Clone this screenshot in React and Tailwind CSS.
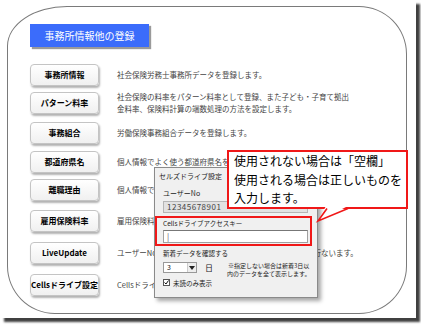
import React from 'react';

const rows = [
  { label: '事務所情報', mt: 'mt-0', text: ['社会保険労務士事務所データを登録します。'] },
  { label: 'パターン料率', mt: 'mt-[6px]', text: ['社会保険の料率をパターン料率として登録、また子ども・子育て拠出', '金料率、保険料計算の端数処理の方法を設定します。'] },
  { label: '事務組合', mt: 'mt-[8px]', text: ['労働保険事務組合データを登録します。'] },
  { label: '都道府県名', mt: 'mt-[7px]', text: ['個人情報でよく使う都道府県名を登録します。'] },
  { label: '離職理由', mt: 'mt-[6px]', text: ['個人情報でよく使う離職理由を登録します。'] },
  { label: '雇用保険料率', mt: 'mt-[9px]', text: ['雇用保険料率を登録します。'] },
  { label: 'LiveUpdate', mt: 'mt-[10px]', text: ['ユーザーNoを入力して、プログラムの最新アップデートを行ないます。'] },
  { label: 'Cellsドライブ設定', mt: 'mt-[10px]', text: ['Cellsドライブの設定を行います。'] },
];

const font = { fontFamily: '"Noto Sans CJK JP", "Noto Sans", sans-serif' };

const SettingsDialog = () => (
  <div className="absolute left-[154px] top-[167px] w-[164px] h-[131px] border border-[#8a8a8a] bg-[#f0f0f0] shadow-[3px_3px_4px_rgba(0,0,0,0.35)] text-[#222]">
    <div className="h-[17px] pt-[3px] pl-[4px] text-[7px] leading-[10px]">セルズドライブ設定</div>
    <div className="mt-[3px] pl-[8px] text-[7px] leading-[10px]">ユーザーNo</div>
    <div className="mt-[3px] ml-[8px] w-[145px] h-[12px] bg-[#e2e2e2] border border-[#b5b5b5] pl-[3px] text-[8px] leading-[10px] tracking-[0.5px] text-[#444]">12345678901</div>
    <div className="mt-[3px] w-[157px] h-[30px] border-2 border-[#f01818]">
      <div className="pt-[1px] pl-[6px] text-[6.5px] leading-[8px]">Cellsドライブアクセスキー</div>
      <div className="mt-[3px] ml-[6px] w-[145px] h-[13px] bg-white border border-[#a0a0a0] border-t-[#777] pl-[3px] text-[8px] leading-[11px] text-[#555]">|</div>
    </div>
    <div className="mt-[3px] pl-[8px] text-[6.5px] leading-[8px]">新着データを確認する</div>
    <div className="mt-[5px] pl-[8px] flex items-start">
      <div className="w-[34px] h-[11px] bg-white border border-[#999] flex">
        <div className="flex-1 pl-[3px] text-[7px] leading-[9px]">3</div>
        <div className="w-[9px] border-l border-[#ccc] bg-[#eee] flex items-center justify-center">
          <svg width="6" height="4" viewBox="0 0 6 4"><path d="M0 0h6L3 4z" fill="#222" /></svg>
        </div>
      </div>
      <div className="ml-[8px] text-[8px] leading-[11px]">日</div>
      <div className="ml-[14px] text-[6px] leading-[8px] text-center">※指定しない場合は新着3日以<br />内のデータを全て表示します。</div>
    </div>
    <div className="pl-[8px] flex items-center h-[9px]">
      <div className="w-[7px] h-[7px] border border-[#555] bg-white flex items-center justify-center">
        <svg width="5" height="5" viewBox="0 0 5 5"><path d="M0.5 2.5l1.5 1.5l2.5-3.5" stroke="#111" strokeWidth="1" fill="none" /></svg>
      </div>
      <span className="ml-[3px] text-[6.5px] leading-[8px]">未読のみ表示</span>
    </div>
  </div>
);

const Callout = () => (
  <>
    <div className="absolute left-[227px] top-[150px] w-[181px] h-[59px] border-2 border-[#f01818] bg-white pl-[5px] text-[12px] leading-[18.5px] text-black">
      <div>使用されない場合は「空欄」</div>
      <div>使用される場合は正しいものを</div>
      <div>入力します。</div>
    </div>
    <svg className="absolute left-[314px] top-[205px]" width="40" height="20" viewBox="0 0 40 20">
      <polygon points="12,1 4,16 34,1" fill="white" />
      <polyline points="13,3.5 4,16 34,3.5" fill="none" stroke="#f01818" strokeWidth="1.6" />
    </svg>
  </>
);

export default function App() {
  return (
    <div className="w-[421px] h-[325px] bg-white" style={font}>
      <div className="relative w-[416px] h-[318px] bg-white shadow-[4px_4px_2px_rgba(0,0,0,0.75)]">
        <div className="ml-[7px] pt-[6px]">
          <div className="w-[400px] h-[308px] border border-[#7a7a7a] rounded-[48px] rounded-tl-[60px_40px] pl-[22px] pt-[17px]">
            <div className="w-[119px] h-[23px] bg-[#3b6cfb] shadow-[2px_2px_1px_#9a9a9a] flex items-center justify-center text-white text-[10px]">
              事務所情報他の登録
            </div>
            <div className="mt-[17px]">
              {rows.map((r) => (
                <div key={r.label} className={`flex items-center h-[22px] ${r.mt}`}>
                  <div className="w-[69px] h-[22px] shrink-0 rounded-[4px] border border-[#c4c4c4] bg-gradient-to-b from-white to-[#f0f0f0] shadow-[1px_2px_2px_rgba(0,0,0,0.3)] flex items-center justify-center text-[8px] font-bold text-black whitespace-nowrap">
                    {r.label}
                  </div>
                  <div className="ml-[18px] text-[7.5px] leading-[12px] text-[#444] whitespace-nowrap">
                    {r.text.map((t) => (
                      <div key={t}>{t}</div>
                    ))}
                  </div>
                </div>
              ))}
            </div>
          </div>
        </div>
        <SettingsDialog />
        <Callout />
      </div>
    </div>
  );
}
